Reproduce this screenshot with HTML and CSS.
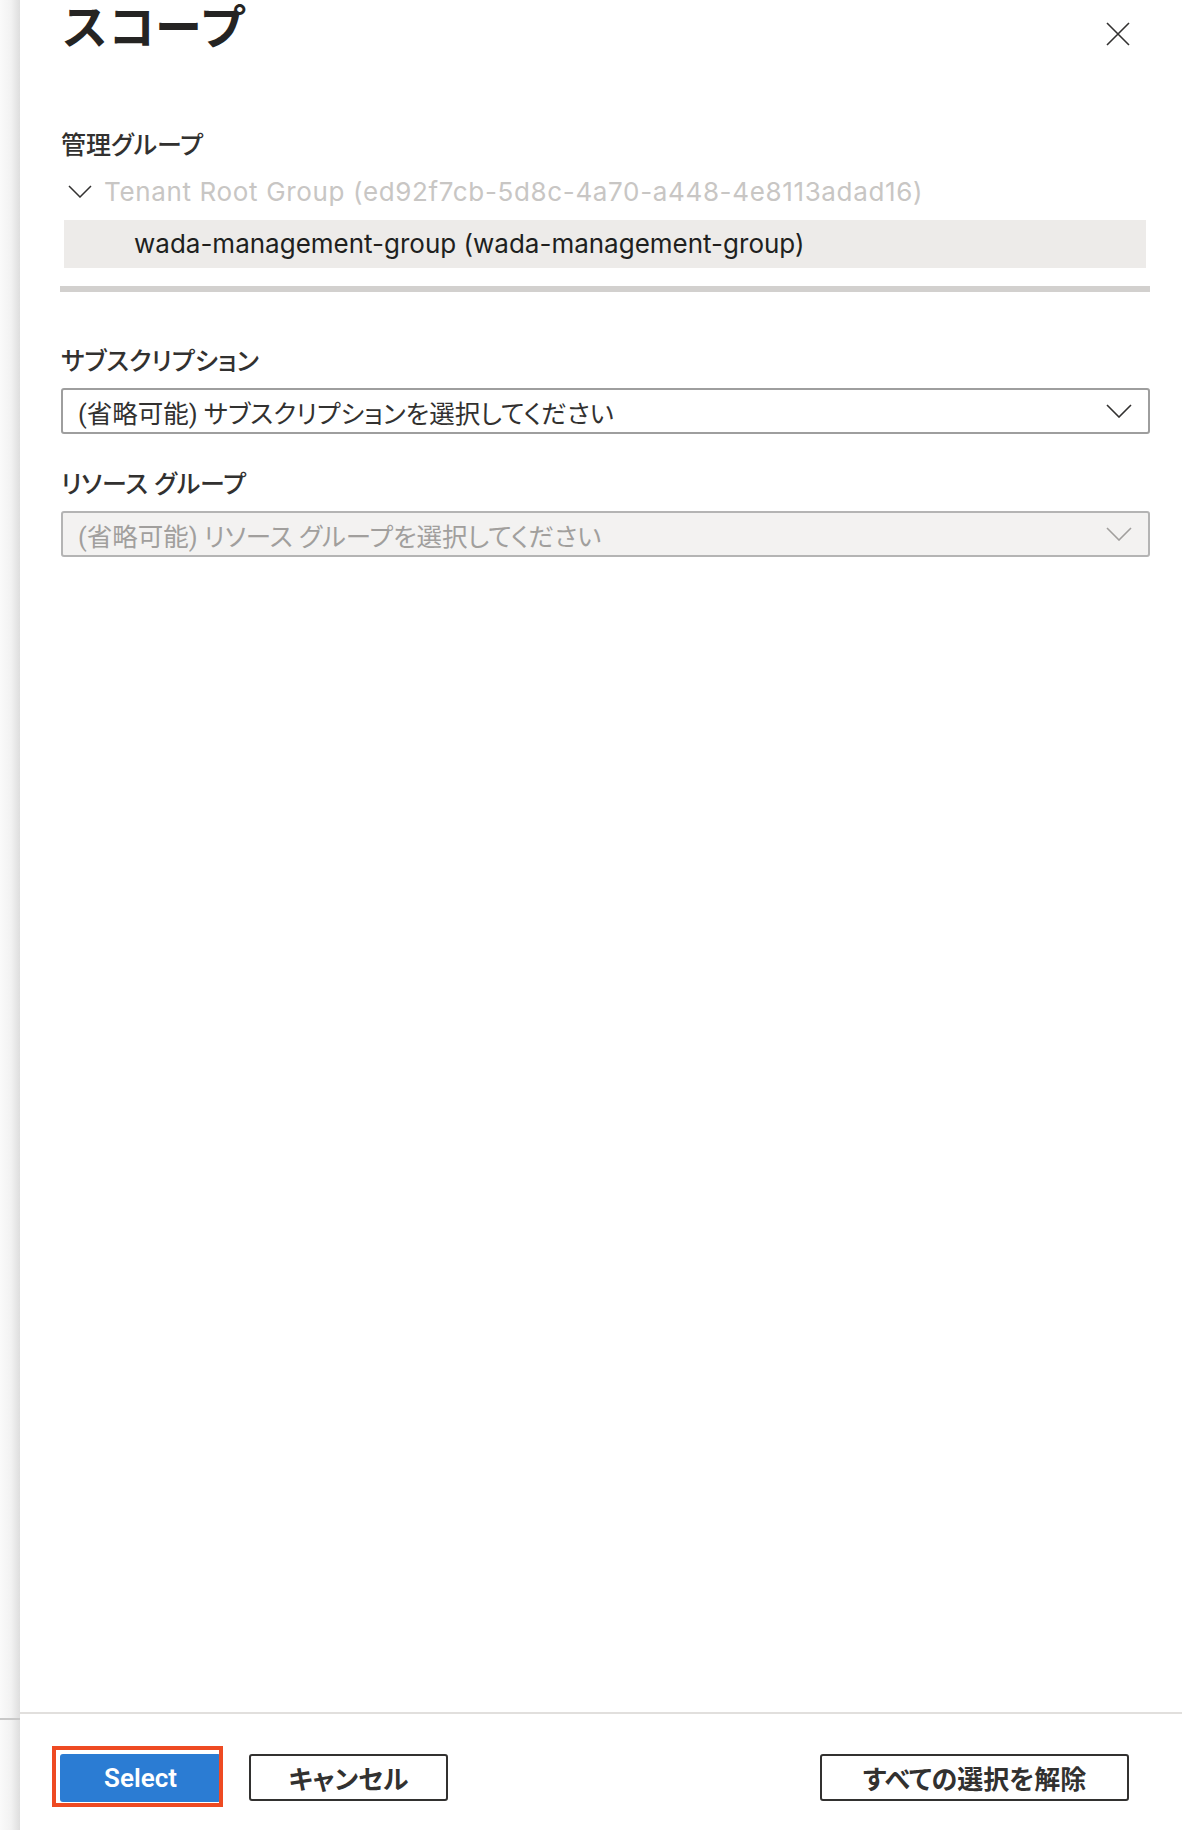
FILE: index.html
```html
<!DOCTYPE html>
<html lang="ja">
<head>
<meta charset="utf-8">
<title>スコープ</title>
<link rel="stylesheet" href="styles.css">
</head>
<body>
<div class="page">
  <div class="backdrop"><div class="backdrop-rule"></div></div>

  <section class="blade">
    <div class="blade-body">
      <header class="blade-header">
        <h1 class="blade-title">スコープ</h1>
        <button class="close-btn" aria-label="閉じる">
          <svg width="24" height="24" viewBox="0 0 24 24">
            <path d="M1 1 L23 23 M23 1 L1 23" stroke="#323130" stroke-width="1.6" fill="none"/>
          </svg>
        </button>
      </header>

      <div class="field field-first">
        <div class="field-label">管理グループ</div>
        <div class="tree">
          <div class="tree-row tree-root">
            <svg class="tree-chevron" width="24" height="13" viewBox="0 0 24 13">
              <path d="M1 1 L12 12 L23 1" stroke="#323130" stroke-width="1.5" fill="none"/>
            </svg>
            <span>Tenant Root Group (ed92f7cb-5d8c-4a70-a448-4e8113adad16)</span>
          </div>
          <div class="tree-row tree-child is-selected">wada-management-group (wada-management-group)</div>
          <div class="tree-scrollbar"></div>
        </div>
      </div>

      <div class="field field-sub">
        <div class="field-label">サブスクリプション</div>
        <div class="select">
          <span>(省略可能) サブスクリプションを選択してください</span>
          <svg class="select-chevron" width="26" height="14" viewBox="0 0 26 14">
            <path d="M1 1 L13 13 L25 1" stroke="#323130" stroke-width="1.6" fill="none"/>
          </svg>
        </div>
      </div>

      <div class="field field-rg">
        <div class="field-label">リソース グループ</div>
        <div class="select is-disabled">
          <span>(省略可能) リソース グループを選択してください</span>
          <svg class="select-chevron" width="26" height="14" viewBox="0 0 26 14">
            <path d="M1 1 L13 13 L25 1" stroke="#a19f9d" stroke-width="1.6" fill="none"/>
          </svg>
        </div>
      </div>
    </div>

    <footer class="blade-footer">
      <div class="footer-left">
        <span class="callout">
          <button class="btn btn-primary">Select</button>
        </span>
        <button class="btn btn-outline btn-cancel">キャンセル</button>
      </div>
      <button class="btn btn-outline btn-clear">すべての選択を解除</button>
    </footer>
  </section>
</div>
</body>
</html>
```

FILE: styles.css
```css
body {
    margin: 0;
    font-family: Roboto, "Noto Sans CJK JP", sans-serif;
    color: #323130;
}

.page {
    display: flex;
    height: 1830px;
}

/* strip of the page behind the blade */
.backdrop {
    width: 20px;
    background: linear-gradient(to right, #fafafa 0%, #f2f2f2 55%, #dedede 100%);
}
.backdrop-rule {
    margin-top: 1718px;
    height: 2px;
    background: #c8c8c8;
}

.blade {
    flex: 1;
    display: flex;
    flex-direction: column;
    background: #fff;
}

.blade-body {
    flex: 1;
    padding: 0 32px 0 41px;
}

.blade-header {
    display: flex;
    justify-content: space-between;
    align-items: flex-start;
    height: 60px;
}
.blade-title {
    margin: 0;
    font-size: 47px;
    font-weight: 700;
    line-height: 56px;
    color: #252423;
}
.close-btn {
    margin: 22px 20px 0 0;
    padding: 0;
    border: none;
    background: none;
    width: 24px;
    height: 24px;
}

.field-label {
    font-size: 25px;
    font-weight: 500;
    line-height: 32px;
    color: #323130;
    font-feature-settings: "palt";
}
.field-first { margin-top: 70px; }
.field-sub { margin-top: 54px; }
.field-rg { margin-top: 35px; }

/* management group tree */
.tree {
    margin-left: -1px;
    padding-top: 8px;
}
.tree-row {
    font-family: Inter, Roboto, sans-serif;
    font-size: 26px;
    white-space: nowrap;
}
.tree-root {
    display: flex;
    align-items: center;
    height: 42px;
    padding-left: 8px;
    color: #c8c6c4;
    letter-spacing: 0.65px;
}
.tree-chevron {
    margin-right: 12px;
}
.tree-child {
    margin: 8px 4px 0;
    height: 48px;
    line-height: 48px;
    padding-left: 70px;
    color: #201f1e;
}
.is-selected {
    background: #edebe9;
}
.tree-scrollbar {
    margin-top: 18px;
    height: 6px;
    background: #d2d0ce;
}

/* dropdowns */
.select {
    margin-top: 10px;
    height: 46px;
    box-sizing: border-box;
    border: 2px solid #9e9e9e;
    border-radius: 3px;
    display: flex;
    align-items: center;
    justify-content: space-between;
    padding: 0 16px 0 15px;
    font-size: 25.5px;
    color: #323130;
    font-feature-settings: "palt";
}
.select.is-disabled {
    background: #f3f2f1;
    border-color: #b4b4b4;
    color: #a19f9d;
}

/* footer */
.blade-footer {
    height: 118px;
    box-sizing: border-box;
    border-top: 2px solid #e1dfdd;
    padding: 40px 53px 0 40px;
    display: flex;
    justify-content: space-between;
    align-items: flex-start;
}
.footer-left {
    display: flex;
    align-items: flex-start;
    gap: 28px;
}

.btn {
    height: 48px;
    border-radius: 3px;
    font-family: Roboto, "Noto Sans CJK JP", sans-serif;
    font-size: 26px;
    font-weight: 600;
    padding: 0;
    font-feature-settings: "palt";
}
.btn-primary {
    width: 161px;
    border: none;
    background: #2b7cd3;
    color: #fff;
}
.btn-outline {
    height: 47px;
    border: 2px solid #323130;
    background: #fff;
    color: #323130;
}
.btn-cancel { width: 199px; }
.btn-clear { width: 309px; }

/* red highlight drawn round the Select button */
.callout {
    position: relative;
    display: block;
}
.callout::after {
    content: "";
    position: absolute;
    left: -8px;
    top: -8px;
    right: -2px;
    bottom: -5px;
    border: 4px solid #ee4a22;
    pointer-events: none;
}
.callout .btn {
    display: block;
}
```
